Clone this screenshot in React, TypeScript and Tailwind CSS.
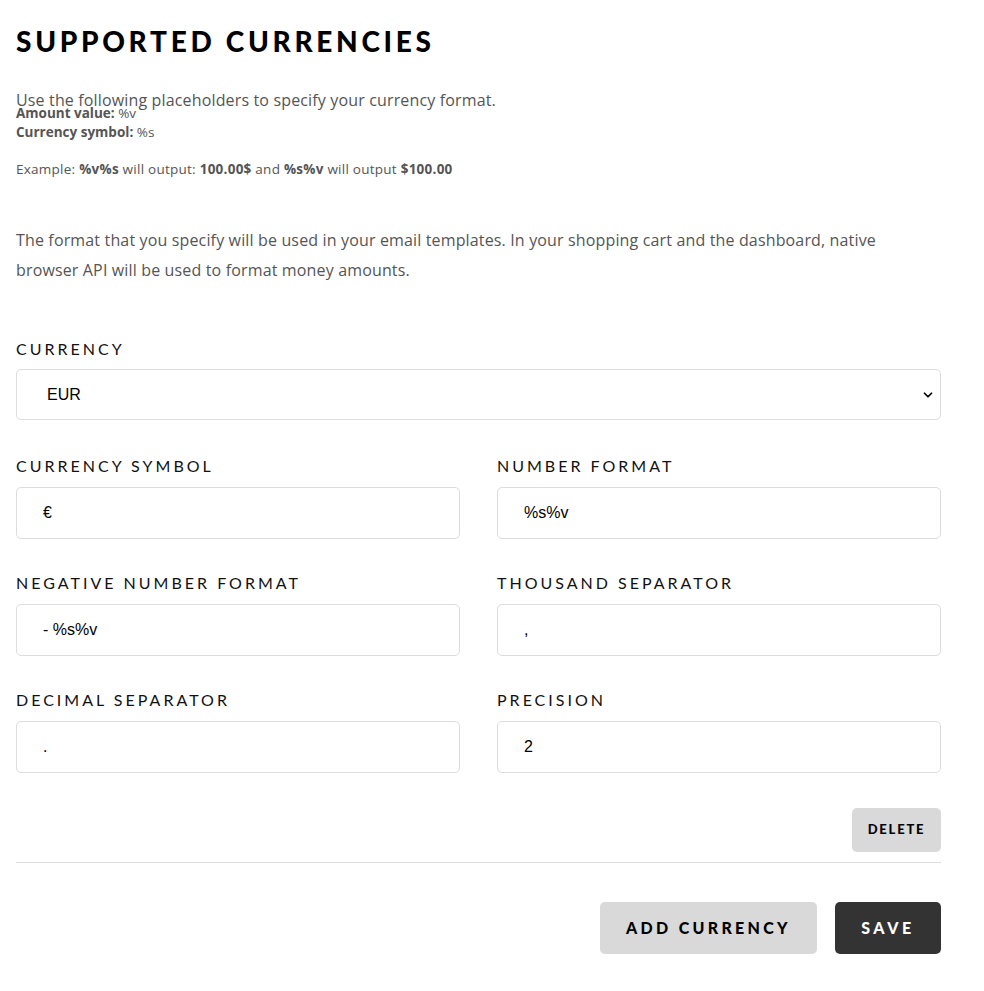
import { ChevronDown } from "lucide-react";

const font = { fontFamily: "Lato, 'Noto Sans', sans-serif" };

function Field({ label, value }: { label: string; value: string }) {
    return (
        <div className="flex flex-col">
            <label className="text-[16px] leading-[24px] tracking-[3px] text-[#111] uppercase">
                {label}
            </label>
            <input
                readOnly
                value={value}
                className="mt-[9px] h-[52px] rounded-[5px] border border-[#dcdcdc] px-[26px] text-[16px] text-black outline-none font-['Liberation_Sans',Arial,sans-serif]"
            />
        </div>
    );
}

export default function App() {
    return (
        <div className="min-h-screen bg-white pl-4 pr-[43px] pt-[24px] pb-10" style={font}>
            <h1 className="text-[28px] leading-[34px] font-black tracking-[3.7px] text-black">
                SUPPORTED CURRENCIES
            </h1>

            <div className="mt-[34px] text-[#555] font-['Open_Sans',sans-serif]">
                <p className="text-[16px] leading-[16px] tracking-[0.15px]">
                    Use the following placeholders to specify your currency format.
                </p>
                <p className="text-[13.5px] leading-[10px]">
                    <strong className="font-bold">Amount value:</strong> %v
                </p>
                <p className="mt-[5px] text-[13.5px] leading-[18px]">
                    <strong className="font-bold">Currency symbol:</strong> %s
                </p>
                <p className="mt-[19px] text-[13.5px] leading-[18px] tracking-[0.25px]">
                    Example: <strong>%v%s</strong> will output: <strong>100.00$</strong> and{" "}
                    <strong>%s%v</strong> will output <strong>$100.00</strong>
                </p>
            </div>

            <p className="mt-[47px] text-[16px] leading-[30px] tracking-[0.15px] text-[#555] font-['Open_Sans',sans-serif]">
                The format that you specify will be used in your email templates. In your shopping cart and the dashboard, native
                <br />
                browser API will be used to format money amounts.
            </p>

            <div className="mt-[52px] flex flex-col">
                <label className="text-[16px] leading-[24px] tracking-[3px] text-[#111]">CURRENCY</label>
                <div className="relative mt-[8px] h-[51px] rounded-[5px] border border-[#dcdcdc] flex items-center px-[30px]">
                    <span className="text-[16px] text-black font-['Liberation_Sans',Arial,sans-serif]">EUR</span>
                    <ChevronDown className="absolute right-[5px] top-1/2 -translate-y-1/2 w-[14px] h-[14px] text-black" strokeWidth={3} />
                </div>
            </div>

            <div className="mt-[34px] grid grid-cols-2 gap-x-[37px] gap-y-[32px]">
                <Field label="Currency symbol" value="€" />
                <Field label="Number format" value="%s%v" />
                <Field label="Negative number format" value="- %s%v" />
                <Field label="Thousand separator" value="," />
                <Field label="Decimal separator" value="." />
                <Field label="Precision" value="2" />
            </div>

            <div className="mt-[35px] flex justify-end">
                <button className="h-[44px] w-[89px] rounded-[5px] bg-[#d9d9d9] text-[13px] font-black tracking-[1.8px] text-black">
                    DELETE
                </button>
            </div>

            <div className="mt-[10px] border-t border-[#dcdcdc]" />

            <div className="mt-[39px] flex justify-end gap-[18px]">
                <button className="h-[52px] w-[217px] rounded-[5px] bg-[#d9d9d9] text-[16px] font-black tracking-[3.3px] text-black">
                    ADD CURRENCY
                </button>
                <button className="h-[52px] w-[106px] rounded-[5px] bg-[#333] text-[16px] font-black tracking-[3.6px] text-white">
                    SAVE
                </button>
            </div>
        </div>
    );
}
